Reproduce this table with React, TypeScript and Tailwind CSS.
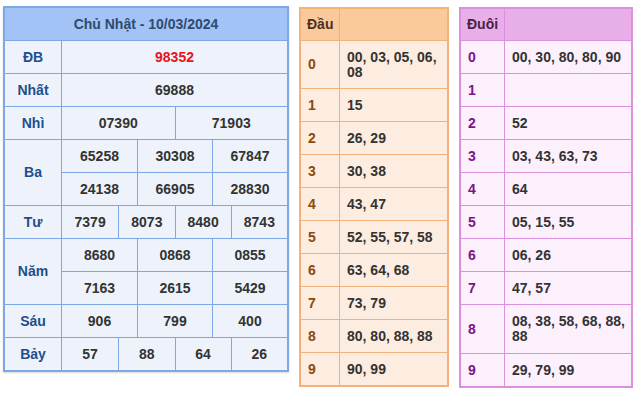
import type { ReactNode } from 'react';

const font = { fontFamily: '"Liberation Sans", Arial, sans-serif' };

type Prize = { label: string; rows: string[][] };

const prizes: Prize[] = [
  { label: 'ĐB', rows: [['98352']] },
  { label: 'Nhất', rows: [['69888']] },
  { label: 'Nhì', rows: [['07390', '71903']] },
  { label: 'Ba', rows: [['65258', '30308', '67847'], ['24138', '66905', '28830']] },
  { label: 'Tư', rows: [['7379', '8073', '8480', '8743']] },
  { label: 'Năm', rows: [['8680', '0868', '0855'], ['7163', '2615', '5429']] },
  { label: 'Sáu', rows: [['906', '799', '400']] },
  { label: 'Bảy', rows: [['57', '88', '64', '26']] },
];

const dau = [
  '00, 03, 05, 06, 08',
  '15',
  '26, 29',
  '30, 38',
  '43, 47',
  '52, 55, 57, 58',
  '63, 64, 68',
  '73, 79',
  '80, 80, 88, 88',
  '90, 99',
];

const duoi = [
  '00, 30, 80, 80, 90',
  '',
  '52',
  '03, 43, 63, 73',
  '64',
  '05, 15, 55',
  '06, 26',
  '47, 57',
  '08, 38, 58, 68, 88, 88',
  '29, 79, 99',
];

const gridCols: Record<number, string> = {
  1: 'grid-cols-1',
  2: 'grid-cols-2',
  3: 'grid-cols-3',
  4: 'grid-cols-4',
};

function ResultTable() {
  return (
    <div className="mt-[6px] w-[286px] border-2 border-[#7ea7e6] bg-[#eef3fb] shadow-[0_1px_2px_rgba(0,0,0,0.15)]">
      <div className="h-[33px] flex items-center justify-center bg-[#a3c2f5] border-b border-[#7ea7e6] text-[14px] font-bold text-[#2f4b6e]">
        Chủ Nhật - 10/03/2024
      </div>
      {prizes.map((p, pi) => {
        const last = pi === prizes.length - 1;
        return (
          <div key={p.label} className={`flex ${last ? '' : 'border-b border-[#7ea7e6]'}`}>
            <div className="w-[57px] shrink-0 flex items-center justify-center border-r border-[#7ea7e6] text-[14px] font-bold text-[#1d4f8c]">
              {p.label}
            </div>
            <div className="flex-1 flex flex-col">
              {p.rows.map((r, ri) => (
                <div
                  key={ri}
                  className={`grid ${gridCols[r.length]} ${ri === p.rows.length - 1 ? 'h-[32px]' : 'h-[33px] border-b border-[#7ea7e6]'}`}
                >
                  {r.map((n, ni) => (
                    <div
                      key={ni}
                      className={`flex items-center justify-center text-[14px] font-bold ${pi === 0 ? 'text-[#e8121b]' : 'text-[#333]'} ${ni > 0 ? 'border-l border-[#7ea7e6]' : ''}`}
                    >
                      {n}
                    </div>
                  ))}
                </div>
              ))}
            </div>
          </div>
        );
      })}
    </div>
  );
}

type Theme = {
  border: string;
  head: string;
  cell: string;
  headText: string;
  label: string;
};

function LotoTable({
  title,
  items,
  width,
  labelW,
  tallRow,
  tallH,
  theme,
}: {
  title: ReactNode;
  items: string[];
  width: string;
  labelW: string;
  tallRow: number;
  tallH: string;
  theme: Theme;
}) {
  return (
    <div className={`mt-[7px] ${width} border-2 ${theme.border} ${theme.cell}`}>
      <div className={`h-[32px] flex border-b ${theme.border} ${theme.head}`}>
        <div className={`${labelW} shrink-0 flex items-center pl-[6px] border-r ${theme.border} text-[14px] font-bold ${theme.headText}`}>
          {title}
        </div>
        <div className="flex-1" />
      </div>
      {items.map((v, i) => (
        <div
          key={i}
          className={`flex ${i === tallRow ? tallH : i === items.length - 1 ? 'h-[32px]' : 'h-[33px]'} ${i === items.length - 1 ? '' : `border-b ${theme.border}`}`}
        >
          <div className={`${labelW} shrink-0 flex items-center pl-[7px] border-r ${theme.border} text-[14px] font-bold ${theme.label}`}>
            {i}
          </div>
          <div className="flex-1 flex items-center pl-[7px] pr-[3px] text-[14px] leading-[15px] font-bold text-[#333]">
            {v}
          </div>
        </div>
      ))}
    </div>
  );
}

export default function App() {
  return (
    <div className="w-[640px] h-[397px] bg-white flex items-start pl-[3px]" style={font}>
      <ResultTable />
      <div className="ml-[10px]">
        <LotoTable
          title="Đầu"
          items={dau}
          width="w-[150px]"
          labelW="w-[39px]"
          tallRow={0}
          tallH="h-[48px]"
          theme={{
            border: 'border-[#f1b27b]',
            head: 'bg-[#fbca9c]',
            cell: 'bg-[#fdede1]',
            headText: 'text-[#4a3222]',
            label: 'text-[#8a4a0c]',
          }}
        />
      </div>
      <div className="ml-[10px]">
        <LotoTable
          title="Đuôi"
          items={duoi}
          width="w-[174px]"
          labelW="w-[44px]"
          tallRow={8}
          tallH="h-[49px]"
          theme={{
            border: 'border-[#da90dc]',
            head: 'bg-[#e7aee8]',
            cell: 'bg-[#fdf0fd]',
            headText: 'text-[#4a2240]',
            label: 'text-[#7a1585]',
          }}
        />
      </div>
    </div>
  );
}
